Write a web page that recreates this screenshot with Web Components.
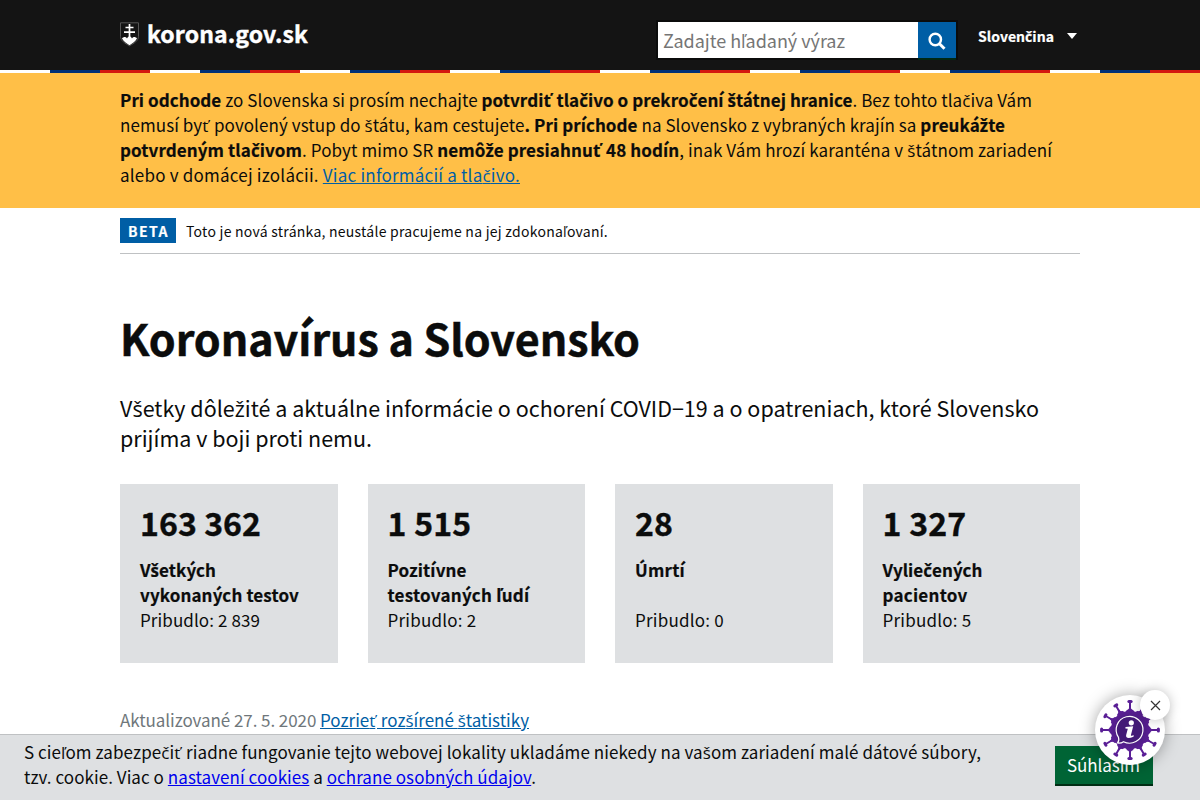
<!DOCTYPE html>
<html lang="sk">
<head>
<meta charset="utf-8">
<title>Koronavírus a Slovensko</title>
<style>
body { margin: 0; background: #fff; height: 800px; overflow: hidden; color: #0b0c0c; font-family: "Noto Sans CJK SC", "Open Sans", sans-serif; font-size: 17px; line-height: 25px; }
</style>
</head>
<body>
<gov-page></gov-page>
<script>
const define = (name, html, after) => customElements.define(name, class extends HTMLElement {
  constructor() {
    super();
    this.attachShadow({ mode: 'open' }).innerHTML = html;
  }
  connectedCallback() { if (after) after(this); }
});

// The main face has no letters with a caron: set those in Open Sans.
function setCarons(el) {
  const walker = document.createTreeWalker(el, NodeFilter.SHOW_TEXT);
  const nodes = [];
  while (walker.nextNode()) nodes.push(walker.currentNode);
  for (const node of nodes) {
    const parts = node.data.split(/([čďěľňřšťžČĎĽŇŠŤŽ])/);
    if (parts.length < 2) continue;
    node.replaceWith(...parts.filter(Boolean).map(part => {
      if (!/^[čďěľňřšťžČĎĽŇŠŤŽ]$/.test(part)) return part;
      const s = document.createElement('span');
      s.style.cssText = 'font-family:"Open Sans",sans-serif;line-height:0';
      if (part === 'ť') s.style.paddingRight = '.1em';
      s.textContent = part;
      return s;
    }));
  }
}

// One line of text, tracked so that it fills the width given in "w".
define('fit-line', `<style>:host{display:block;width:max-content;white-space:pre}</style><slot></slot>`, el => {
  setCarons(el);
  const w = parseFloat(el.getAttribute('w'));
  const n = el.textContent.length;
  el.style.letterSpacing = ((w - el.getBoundingClientRect().width) / n) + 'px';
});

define('gov-header', `<style>
:host{display:block;background:#141414}
.in{width:960px;margin:0 auto;height:70px;display:flex;align-items:flex-start;color:#fff;font-weight:700}
.logo{display:flex;gap:8px;padding-top:21px;flex:1}
.logo svg{margin-top:1px}
.logo fit-line{font-size:23px;line-height:25px;-webkit-text-stroke:.4px #fff}
.search{display:flex;margin-top:22px;box-shadow:0 0 0 2px #0b0c0c}
.field{width:255px;height:36px;background:#fff;color:#757575;font-weight:400;font-size:18px;line-height:37px;padding-left:5px}
.btn{width:38px;height:36px;background:#005ea5;display:flex;align-items:center;justify-content:center;box-shadow:0 2px 0 #002814}
.btn svg{margin:2px 0 0 1px}
.lang{display:flex;align-items:center;gap:13px;margin:24px 3px 0 22px;font-size:14px;-webkit-text-stroke:.2px #fff}
.lang svg{margin-top:-2px}
.stripe{height:3px;background:repeating-linear-gradient(90deg,#fff 0 50px,#003078 50px 100px,#d4170f 100px 150px)}
</style>
<div class="in">
 <div class="logo">
  <svg width="19" height="25" viewBox="0 0 19 25"><path d="M.5.8h18v13.500c0 4.500-4.500 7-9 9.500-4.500-2.500-9-5-9-9.500z" fill="#141414" stroke="#555"/><path d="M2 16.500c1.500-2 4-2 5 0 .7-1.500 1.500-2 2.500-2s1.800.5 2.500 2c1-2 3.500-2 5 0-1.500 3-4.500 5-7.500 6.700C6.500 21.500 3.500 19.500 2 16.500z" fill="#fff"/><path d="M9.500 2v14M5.500 5.500h8M4 10.200h11" stroke="#fff" stroke-width="1.700"/></svg>
  <fit-line w="161">korona.gov.sk</fit-line>
 </div>
 <div class="search"><div class="field"><fit-line w="182">Zadajte hľadaný výraz</fit-line></div>
 <div class="btn"><svg width="18" height="18" viewBox="0 0 18 18" fill="none" stroke="#fff"><circle cx="7.300" cy="7.500" r="5.700" stroke-width="2.400"/><path d="M11.500 11.700l5 5" stroke-width="3"/></svg></div></div>
 <div class="lang"><fit-line w="76">Slovenčina</fit-line><svg width="10" height="6"><path d="M0 0h10L5 6z" fill="#fff"/></svg></div>
</div>
<div class="stripe"></div>`);

define('gov-warning', `<style>
:host{display:block;background:#ffbf47;padding:14px 120px 21px}
a{color:#005ea5}
b{-webkit-text-stroke:.2px #0b0c0c}
</style>
<fit-line w="912"><b>Pri odchode</b> zo Slovenska si prosím nechajte <b>potvrdiť tlačivo o prekročení štátnej hranice</b>. Bez tohto tlačiva Vám</fit-line>
<fit-line w="885">nemusí byť povolený vstup do štátu, kam cestujete<b>. Pri príchode</b> na Slovensko z vybraných krajín sa <b>preukážte</b></fit-line>
<fit-line w="932"><b>potvrdeným tlačivom</b>. Pobyt mimo SR <b>nemôže presiahnuť 48 hodín</b>, inak Vám hrozí karanténa v štátnom zariadení</fit-line>
<fit-line w="400">alebo v domácej izolácii. <a href="#">Viac informácií a tlačivo.</a></fit-line>`);

define('beta-bar', `<style>
:host{display:flex;gap:10px;padding:10px 0;border-bottom:1px solid #bfc1c3;font-size:14px}
b{background:#005ea5;color:#fff;width:48px;padding-left:8px;height:25px;line-height:26px;-webkit-text-stroke:.2px #fff}
.t{line-height:27px;height:25px}
</style><b><fit-line w="41">BETA</fit-line></b><div class="t"><fit-line w="422">Toto je nová stránka, neustále pracujeme na jej zdokonaľovaní.</fit-line></div>`);

define('stat-card', `<style>
:host{display:flex;flex-direction:column;background:#dee0e2;padding:18px 20px 22px;height:139px;flex:1}
.n{font-size:32px;line-height:40px;font-weight:700;margin-bottom:15px;-webkit-text-stroke:.4px #0b0c0c}
.l{font-weight:700;height:50px;-webkit-text-stroke:.2px #0b0c0c}
</style><div class="n"><slot name="number"></slot></div><div class="l"><slot></slot></div><slot name="added"></slot>`);

define('gov-main', `<style>
:host{display:block;width:960px;margin:0 auto}
h1{font-size:43px;line-height:50px;margin:58px 0 31px;-webkit-text-stroke:.5px #0b0c0c}
.lead{font-size:21.500px;line-height:30px;margin-bottom:31px}
.cards{display:flex;gap:30px}
.upd{display:flex;margin-top:44px;color:#6f777b}
a{color:#005ea5}
</style>
<beta-bar></beta-bar>
<h1><fit-line w="520">Koronavírus a Slovensko</fit-line></h1>
<div class="lead"><fit-line w="919">Všetky dôležité a aktuálne informácie o ochorení COVID−19 a o opatreniach, ktoré Slovensko</fit-line><fit-line w="252">prijíma v boji proti nemu.</fit-line></div>
<div class="cards">
<stat-card><fit-line w="121" slot="number">163 362</fit-line><fit-line w="76">Všetkých</fit-line><fit-line w="159">vykonaných testov</fit-line><fit-line w="120" slot="added">Pribudlo: 2 839</fit-line></stat-card>
<stat-card><fit-line w="84" slot="number">1 515</fit-line><fit-line w="79">Pozitívne</fit-line><fit-line w="142">testovaných ľudí</fit-line><fit-line w="89" slot="added">Pribudlo: 2</fit-line></stat-card>
<stat-card><fit-line w="38" slot="number">28</fit-line><fit-line w="50">Úmrtí</fit-line><fit-line w="89" slot="added">Pribudlo: 0</fit-line></stat-card>
<stat-card><fit-line w="84" slot="number">1 327</fit-line><fit-line w="100">Vyliečených</fit-line><fit-line w="85">pacientov</fit-line><fit-line w="89" slot="added">Pribudlo: 5</fit-line></stat-card>
</div>
<div class="upd"><fit-line w="200">Aktualizované 27. 5. 2020 </fit-line><a href="#"><fit-line w="209">Pozrieť rozšírené štatistiky</fit-line></a></div>`);

define('cookie-bar', `<style>
:host{position:fixed;left:0;right:0;bottom:0;height:65px;background:#dee0e2;border-top:1px solid #bfc1c3;display:flex;justify-content:space-between}
.t{padding:4px 0 0 24px}
a{color:#00e}
.b{margin:11px 47px 0 0;width:86px;height:38px;padding-left:12px;background:#006435;color:#fff;box-shadow:0 2px 0 #002d14;line-height:38px;white-space:nowrap}
</style><div class="t"><fit-line w="957">S cieľom zabezpečiť riadne fungovanie tejto webovej lokality ukladáme niekedy na vašom zariadení malé dátové súbory,</fit-line>
<fit-line w="512">tzv. cookie. Viac o <a href="#">nastavení cookies</a> a <a href="#">ochrane osobných údajov</a>.</fit-line></div>
<div class="b"><fit-line w="73">Súhlasím</fit-line></div>`);

define('virus-help', `<style>
:host{position:fixed;left:1095px;top:695px;width:70px;height:70px;border-radius:50%;background:#fff;box-shadow:0 0 16px rgba(0,0,0,.35)}
.x{position:absolute;left:45px;top:-5px;width:30px;height:30px;border-radius:50%;background:#fff;box-shadow:0 0 12px rgba(0,0,0,.25)}
svg{display:block}
</style>
<svg width="70" height="70" viewBox="-35 -35 70 70"><defs><radialGradient id="g"><stop offset="0" stop-color="#3a1a66"/><stop offset="1" stop-color="#5a1f96"/></radialGradient></defs><g id="s" stroke="#5a1f96" fill="#5a1f96"></g><circle r="20.500" fill="url(#g)"/><g id="d" fill="#fff"></g>
<path d="M-11.500 7.300A13.400 13.400 0 1 1-6.500 11.700Q-9 13.500-12.500 13Q-10.500 11-11.500 7.300z" fill="#431a76" stroke="#fff" stroke-width="1.200"/>
<g fill="#fff"><circle cx="1.300" cy="-7.200" r="2.600"/><path d="M-4.500-3L3.200-3.800.9 5.200Q.8 6.300 3.800 5.300L3.500 6.800Q-4.300 9.800-3.900 5.200L-2.200-1.300-4.600-1.500z"/></g></svg>
<div class="x"><svg width="30" height="30"><path d="M11 11l9 9m0-9l-9 9" stroke="#333" stroke-width="1.200"/></svg></div>`, el => {
  let s = '', d = '';
  for (let i = 0; i < 12; i++) {
    s += `<g transform="rotate(${i * 30})"><path d="M0-19V-28" stroke-width="2"/><path d="M-1.100-28.400h2.200" stroke-width="3" stroke-linecap="round"/><path d="M-4-19Q-.5-20.500 0-25Q.5-20.500 4-19z" stroke="none"/></g>`;
    d += `<path transform="rotate(${i * 30 + 15})" d="M-2.700-22.500Q-2.500-19 0-19T2.700-22.500z"/>`;
  }
  el.shadowRoot.getElementById('s').innerHTML = s;
  el.shadowRoot.getElementById('d').innerHTML = d;
});

define('gov-page', `<style>:host{display:block}</style><gov-header></gov-header><gov-warning></gov-warning><gov-main></gov-main><cookie-bar></cookie-bar><virus-help></virus-help>`);
</script>
</body>
</html>
